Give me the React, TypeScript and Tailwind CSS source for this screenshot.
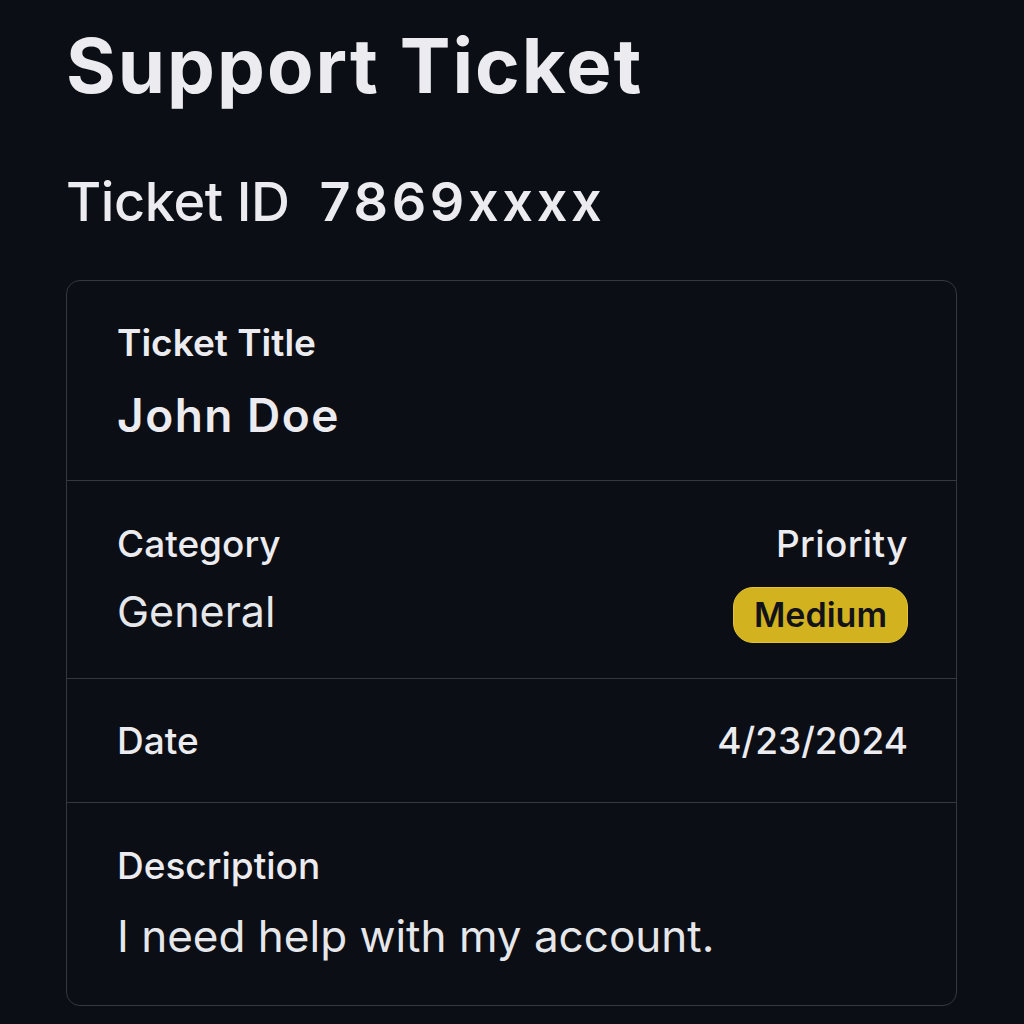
const Row: React.FC<{ className?: string; children: React.ReactNode }> = ({ className, children }) => (
  <div className={`pl-[50px] pr-[48px] ${className ?? ""}`}>{children}</div>
);

export default function App() {
  return (
    <div
      className="min-h-screen w-full bg-[#0b0e15] text-[#ececf0] px-[66px] pt-[27px]"
      style={{ fontFamily: "Inter, 'Noto Sans', sans-serif" }}
    >
      <h1 className="text-[76px] leading-none font-bold tracking-[2px]">Support Ticket</h1>
      <div className="mt-[72px] flex items-baseline gap-[30px] text-[54px] leading-none">
        <span className="font-medium tracking-[-0.4px]">Ticket ID</span>
        <span className="font-semibold tracking-[3.6px]">7869xxxx</span>
      </div>

      <div className="mt-[51px] w-[891px] rounded-[14px] border border-[#343842] divide-y divide-[#343842]">
        <Row className="pt-[43px] pb-[42px]">
          <div className="text-[37px] leading-none font-semibold">Ticket Title</div>
          <div className="mt-[31px] text-[46px] leading-none font-semibold tracking-[1.5px]">John Doe</div>
        </Row>

        <Row className="pt-[44px] pb-[35px] flex justify-between">
          <div className="flex flex-col">
            <span className="text-[37px] leading-none font-medium">Category</span>
            <span className="mt-[28px] text-[43px] leading-none text-[#e6e7eb]">General</span>
          </div>
          <div className="flex flex-col items-end">
            <span className="text-[37px] leading-none font-medium tracking-[0.4px]">Priority</span>
            <span className="mt-[25px] h-[56px] px-[20px] flex items-center rounded-[20px] bg-[#d3b21f] border border-[#e2c335] text-[#12131a] text-[34px] font-semibold leading-none">
              Medium
            </span>
          </div>
        </Row>

        <Row className="pt-[43px] pb-[43px] flex justify-between">
          <span className="text-[37px] leading-none font-medium">Date</span>
          <span className="text-[37px] leading-none font-medium">4/23/2024</span>
        </Row>

        <Row className="pt-[44px] pb-[47px]">
          <div className="text-[37px] leading-none font-medium">Description</div>
          <div className="mt-[30px] text-[44px] leading-none text-[#e6e7eb]">I need help with my account.</div>
        </Row>
      </div>
    </div>
  );
}
